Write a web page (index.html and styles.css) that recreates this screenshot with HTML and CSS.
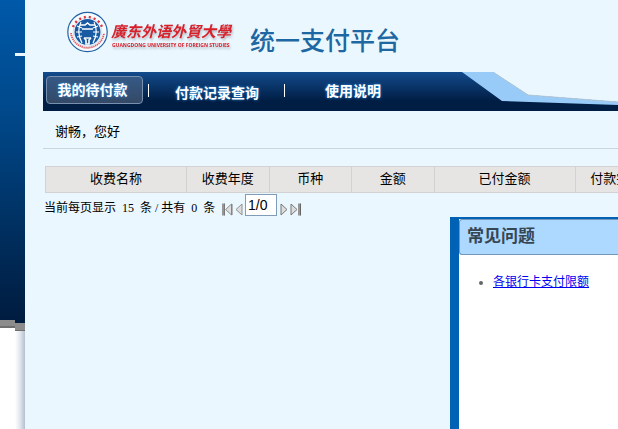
FILE: index.html
```html
<!DOCTYPE html>
<html lang="zh-CN">
<head>
  <meta charset="UTF-8" />
  <meta name="viewport" content="width=device-width, initial-scale=1.0" />
  <title>统一支付平台</title>
  <link rel="stylesheet" href="styles.css">
</head>
<body>
  <div class="rail"></div>
  <div class="rail-inner"><span class="dash"></span></div>

  <div class="page">
    <header class="header">
      <svg class="logo" width="170" height="48" viewBox="0 0 170 48" role="img" aria-label="广东外语外贸大学">
        <circle cx="20.5" cy="22" r="19.7" fill="#f6fbfe" stroke="#2462a5" stroke-width="1.2" />
        <circle cx="20.5" cy="22" r="14.4" fill="none" stroke="#a9c8e2" stroke-width="0.5" />
        <path d="M6 17 A15.5 15.5 0 0 1 35 17" fill="none" stroke="#dc3540" stroke-width="2.4" stroke-dasharray="2 3" />
        <path d="M4 23 A16.6 16.6 0 0 0 37 23" fill="none" stroke="#df5862" stroke-width="1.8" stroke-dasharray="1.3 0.7" />
        <circle cx="20.5" cy="22" r="13" fill="#185ba2" />
        <path d="M9 22 H15 M26 22 H32 M10 16 L15 18 M31 16 L26 18 M10 27 L15 26 M31 27 L26 26 M14 12 Q9 22 15 33 M27 12 Q32 22 26 33" fill="none" stroke="#fff" stroke-width="1.2" />
        <path d="M13 15 H18 L20.5 13 L23 15 H28 M15 19 H26 M17 28 L19 30 V34 H22 V30 L24 28" fill="none" stroke="#fff" stroke-width="1.6" />
        <path d="M16 20 H25 V25 L23 28 H18 L16 25 Z" fill="#185ba2" />
        <path d="M17 28 H24" stroke="#fff" stroke-width="1.4" />
        <g class="logo-text">
          <text class="logo-cn" x="44" y="27">廣东外语外貿大學</text>
          <text class="logo-en" x="45" y="37">GUANGDONG UNIVERSITY OF FOREIGN STUDIES</text>
        </g>
      </svg>
      <h1>统一支付平台</h1>
    </header>

    <nav class="nav">
      <a class="tab active" href="#">我的待付款</a>
      <span class="sep"></span>
      <a class="tab records" href="#">付款记录查询</a>
      <span class="sep"></span>
      <a class="tab help" href="#">使用说明</a>
      <svg class="swoosh" viewBox="0 0 600 39" width="600" height="39" aria-hidden="true">
        <path d="M31 0 H600 V39 L156 30 L66 23 Z" fill="#eaf7ff" />
        <path d="M0 0 H31 L66 23 L156 30 L600 39 H400 L156 33 L40 29 Z" fill="#99cbf8" />
        <path d="M31 0 L66 23 L156 30" fill="none" stroke="#b3cadb" />
      </svg>
    </nav>

    <p class="greeting">谢畅，您好</p>

    <table class="bills">
      <colgroup>
        <col class="c-wide"><col><col><col><col class="c-wide"><col>
      </colgroup>
      <thead>
        <tr>
          <th>收费名称</th>
          <th>收费年度</th>
          <th>币种</th>
          <th>金额</th>
          <th>已付金额</th>
          <th>付款完成</th>
        </tr>
      </thead>
    </table>

    <form class="pager">
      <span class="count">当前每页显示&nbsp; 15&nbsp; 条 / 共有&nbsp; 0&nbsp; 条</span>
      <button type="button" aria-label="首页">
        <svg width="11" height="13" viewBox="0 0 22 26"><path d="M0 1 H5 V25 H0 Z" fill="#969696" /><path d="M19 2 V24 L7 13 Z" fill="#ddd" stroke="#929292" stroke-width="2" /><path d="M5 1 V25 M20 2 V24" stroke="#777" stroke-width="2" /></svg>
      </button>
      <button type="button" aria-label="上一页">
        <svg width="8" height="13" viewBox="0 0 16 26"><path d="M14 2 V24 L2 13 Z" fill="#ddd" stroke="#929292" stroke-width="2" /></svg>
      </button>
      <input type="text" value="1/0" aria-label="页码" />
      <button type="button" aria-label="下一页">
        <svg width="8" height="13" viewBox="0 0 16 26"><path d="M2 2 V24 L14 13 Z" fill="#ddd" stroke="#777" stroke-width="2" /></svg>
      </button>
      <button type="button" aria-label="末页">
        <svg width="11" height="13" viewBox="0 0 22 26"><path d="M16 1 H21 V25 H16 Z" fill="#969696" /><path d="M2 2 V24 L14 13 Z" fill="#ddd" stroke="#777" stroke-width="2" /><path d="M21 1 V25" stroke="#666" stroke-width="2" /></svg>
      </button>
    </form>

    <aside class="faq">
      <h2>常见问题</h2>
      <ul>
        <li><a href="#">各银行卡支付限额</a></li>
      </ul>
    </aside>
  </div>
</body>
</html>
```
FILE: styles.css
```css
* { box-sizing: border-box; }

body {
  margin: 0;
  min-height: 100vh;
  display: flex;
  overflow: hidden;
  background: #fff;
  color: #000;
  font-family: "Liberation Sans", "Noto Sans CJK SC", sans-serif;
  font-size: 13px;
  line-height: 16px;
}

/* blue strip left of the page */
.rail {
  flex: none;
  width: 15px;
  background:
    linear-gradient(#8c8c8c 6px, #6f6f6f 6px) 0 320px / 100% 8px no-repeat,
    linear-gradient(#0059a9, #004788 120px, #002046 300px, #001c40) 0 0 / 100% 320px no-repeat;
}

.rail-inner {
  flex: none;
  width: 10px;
  padding-top: 53px;
  background:
    linear-gradient(#8c8c8c 7px, #6f6f6f 7px) 0 323px / 100% 8px no-repeat,
    linear-gradient(#0059a9, #004788 120px, #002046 300px, #001c40) 0 0 / 100% 323px no-repeat,
    linear-gradient(to right, #fff, #e2e7ed 50%, #b3c0ce);
}

.dash {
  display: block;
  height: 3px;
  background: #eaf7ff;
}

.page {
  flex: 1;
  min-width: 0;
  display: flex;
  flex-direction: column;
  padding-left: 18px;
  overflow: hidden;
  background: #eaf7ff;
}

.header {
  display: flex;
  align-items: flex-start;
  height: 72px;
  padding: 10px 0 0 24px;
}

.logo {
  flex: none;
}

.logo-text {
  fill: #d8202b;
  filter: drop-shadow(1px 2px 1px #b4bcc4);
}

.logo-cn {
  font: italic bold 15px "Noto Sans CJK SC", sans-serif;
}

.logo-en {
  font: bold 5px "Open Sans", sans-serif;
}

h1 {
  margin: 12px 0 0 13px;
  color: #1d67a2;
  font: 500 25px/34px "Noto Sans CJK SC", sans-serif;
  white-space: nowrap;
}

.nav {
  display: flex;
  align-items: flex-start;
  height: 39px;
  padding: 4px 0 0 3px;
  background: linear-gradient(#134b8d, #001d43 75%, #001d43);
}

.tab {
  flex: none;
  color: #fff;
  font: bold 14px/24px "Noto Sans CJK SC", sans-serif;
  text-decoration: none;
  text-shadow: 0 0 3px #2c91e8;
}

.active {
  width: 97px;
  height: 28px;
  padding-right: 4px;
  border: 1px solid #7890b0;
  border-radius: 4px;
  background: linear-gradient(#355985, #344966);
  text-align: center;
}

.sep {
  flex: none;
  width: 1px;
  height: 13px;
  margin: 8px 0 0 5px;
  background: #fff;
}

.records {
  padding: 4px 20px 0 26px;
}

.help {
  width: 177px;
  padding: 2px 0 0 40px;
}

.swoosh {
  flex: none;
  margin-top: -4px;
}

.greeting {
  margin: 0;
  height: 38px;
  padding: 13px 12px 0;
  border-bottom: 1px solid #c9d5df;
}

.bills {
  width: 613px;
  margin: 17px 0 0 2px;
  table-layout: fixed;
  border-collapse: collapse;
}

.c-wide {
  width: 141px;
}

.bills th {
  height: 26px;
  padding: 0 0 2px;
  border: 1px solid #d2d2d2;
  background: #e6e5e3;
  font-weight: normal;
  white-space: nowrap;
}

.pager {
  display: flex;
  align-items: flex-start;
  height: 24px;
  padding: 1px 0 0 1px;
}

.count {
  width: 178px;
  padding-top: 6px;
  font-family: "Liberation Serif", "Noto Sans CJK SC", serif;
  font-size: 12px;
  white-space: nowrap;
}

.pager button {
  margin: 9px 2px 0 0;
  padding: 0;
  border: 0;
  background: none;
  line-height: 0;
  cursor: pointer;
}

.pager input {
  width: 32px;
  height: 22px;
  margin-right: 3px;
  padding: 0 2px;
  border: 1px solid #7f9db9;
  background: #fff;
  font: 14px "Liberation Sans", sans-serif;
}

.faq {
  flex: 1;
  margin-left: 407px;
  border-top: 2px solid #0061b5;
  border-left: 9px solid #0061b5;
  background: #fff;
}

.faq h2 {
  margin: 0;
  padding: 0 7px;
  border: 1px solid #7397ba;
  border-right: 0;
  border-radius: 3px 0 0 3px;
  background: #add8ff;
  color: #364653;
  font-size: 17px;
  line-height: 34px;
}

.faq ul {
  margin: 18px 0 0;
  padding-left: 34px;
  color: #666;
  font-size: 12px;
  line-height: 18px;
}

.faq a {
  color: #0000f0;
}
```
